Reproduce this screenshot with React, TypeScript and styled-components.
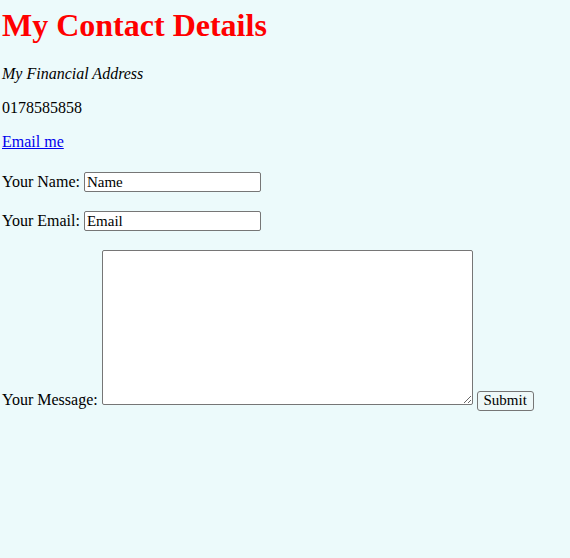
import React from "react";
import styled, { createGlobalStyle } from "styled-components";

const Global = createGlobalStyle`
  html, body {
    margin: 0;
    padding: 0;
    background: #ecfafb;
  }
  body {
    font-family: "Liberation Serif", "Times New Roman", serif;
    font-size: 16px;
    color: #000;
  }
`;

const Page = styled.div`
  padding: 7px 2px 0;
  min-height: 558px;
  box-sizing: border-box;
`;

const Title = styled.h1`
  margin: 0 0 21px;
  font-size: 32px;
  font-weight: bold;
  color: #ff0000;
`;

const Para = styled.p<{ $italic?: boolean }>`
  margin: 16px 0;
  font-style: ${(p) => (p.$italic ? "italic" : "normal")};
`;

const MailLink = styled.a`
  color: #0000ee;
  text-decoration: underline;
`;

const Form = styled.form`
  margin: 0;
`;

const Row = styled.p`
  margin: 19px 0 0;
  &:first-child {
    margin-top: 21px;
  }
`;

const TextInput = styled.input`
  box-sizing: border-box;
  width: 177px;
  height: 20px;
  padding: 0 2px;
  border: 1px solid #767676;
  border-radius: 2px;
  background: #fff;
  font-family: "Liberation Serif", "Times New Roman", serif;
  font-size: 15px;
  color: #000;
`;

const MessageBox = styled.textarea`
  box-sizing: border-box;
  width: 371px;
  height: 155px;
  padding: 2px;
  border: 1px solid #767676;
  border-radius: 2px;
  background: #fff;
  font-family: "Liberation Serif", "Times New Roman", serif;
  font-size: 15px;
  vertical-align: baseline;
`;

const SubmitButton = styled.button`
  box-sizing: border-box;
  width: 57px;
  height: 20px;
  padding: 0 4px;
  border: 1px solid #767676;
  border-radius: 3px;
  background: #eef8f8;
  font-family: "Liberation Serif", "Times New Roman", serif;
  font-size: 15px;
  color: #000;
`;

export default function App() {
  return (
    <>
      <Global />
      <Page>
        <Title>My Contact Details</Title>
        <Para $italic>My Financial Address</Para>
        <Para>0178585858</Para>
        <Para>
          <MailLink href="#">Email me</MailLink>
        </Para>
        <Form onSubmit={(e) => e.preventDefault()}>
          <Row>
            Your Name: <TextInput type="text" defaultValue="Name" />
          </Row>
          <Row>
            Your Email: <TextInput type="text" defaultValue="Email" />
          </Row>
          <Row>
            Your Message: <MessageBox /> <SubmitButton type="submit">Submit</SubmitButton>
          </Row>
        </Form>
      </Page>
    </>
  );
}
